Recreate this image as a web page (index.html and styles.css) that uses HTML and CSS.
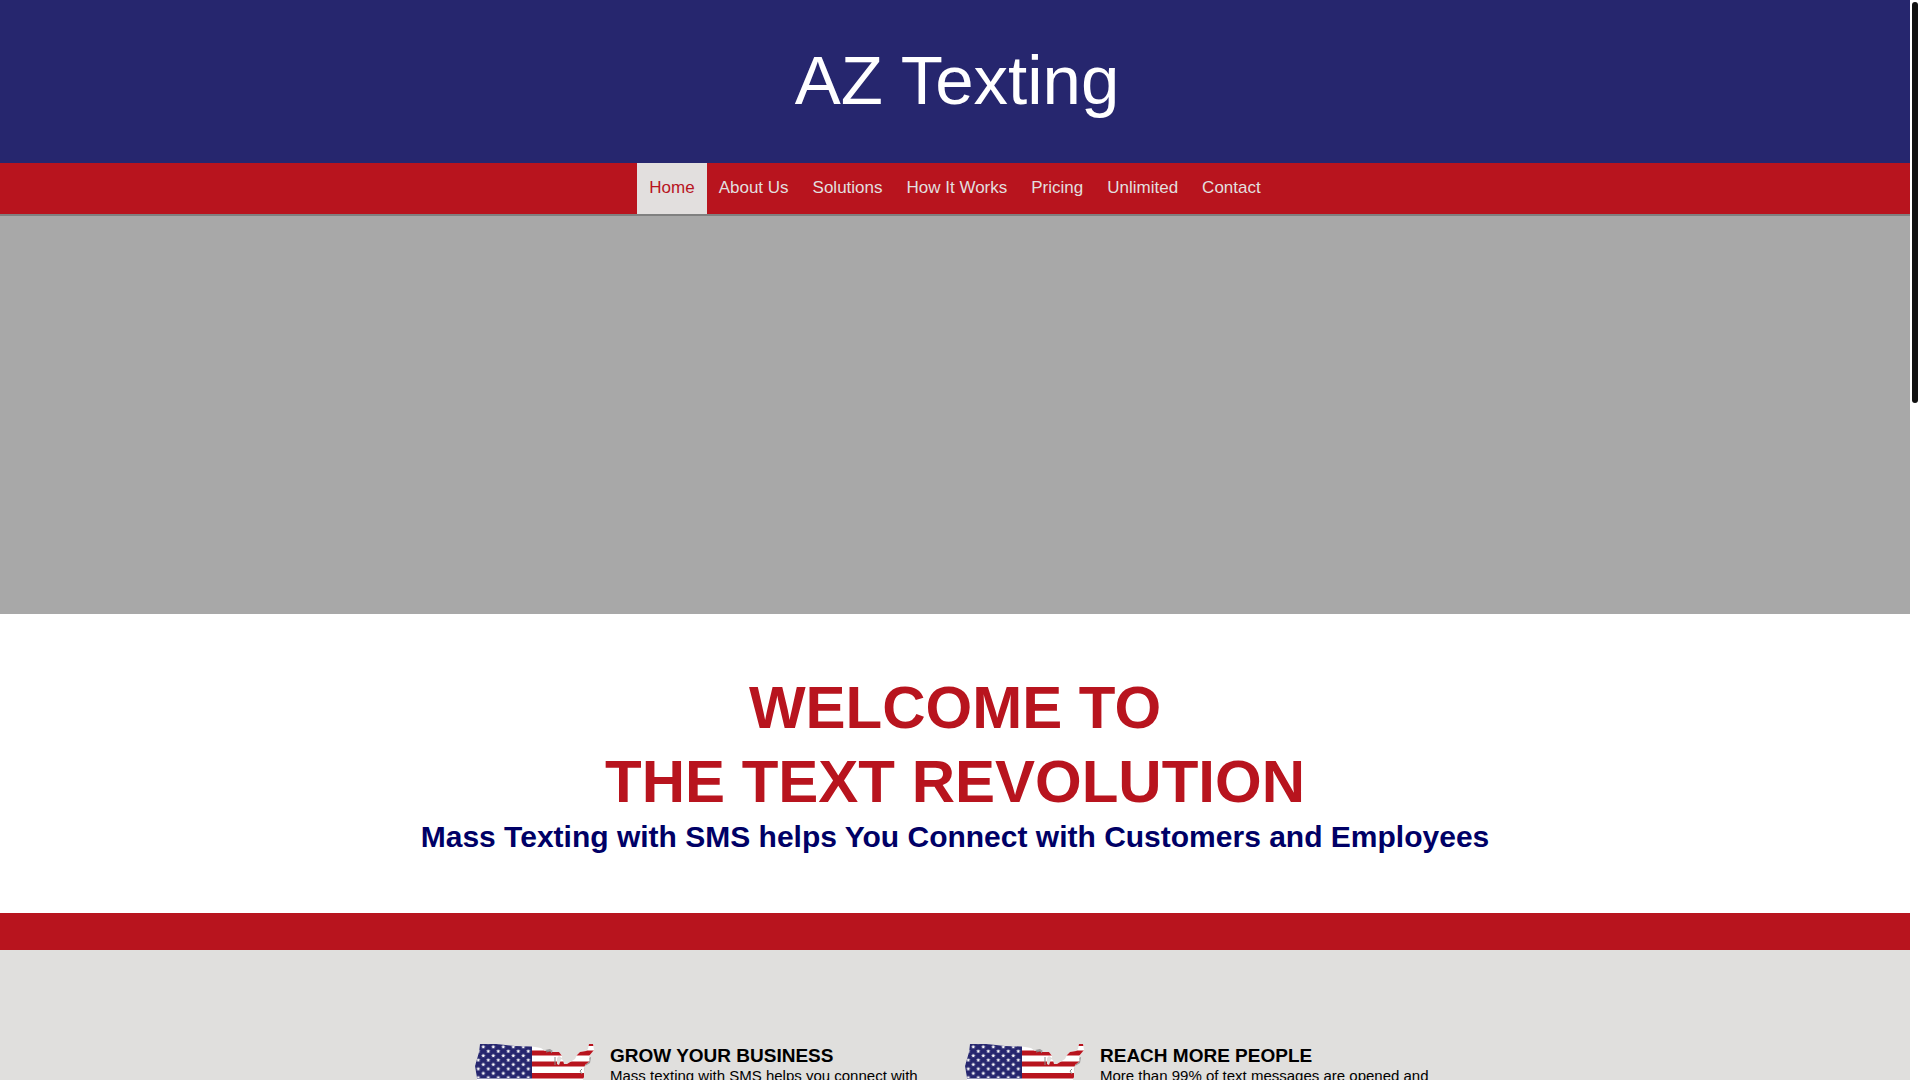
FILE: index.html
```html
<!DOCTYPE html>
<html lang="en">
<head>
    <meta charset="UTF-8">
    <meta name="viewport" content="width=device-width, initial-scale=1.0">
    <title>AZ Texting</title>
    <link rel="stylesheet" href="styles.css">
</head>
<body>
    <svg class="sprite" aria-hidden="true">
        <defs>
            <pattern id="stars" width="10" height="8.8" patternUnits="userSpaceOnUse" x="3.3" y="-1.7">
                <path id="star" fill="#fff" d="M5 2.400l.6 1.300 1.400.2-1 1 .3 1.400L5 5.600l-1.300.7.300-1.400-1-1 1.400-.2z"/>
                <use href="#star" x="-5" y="-4.4"/>
                <use href="#star" x="5" y="-4.4"/>
                <use href="#star" x="-5" y="4.4"/>
                <use href="#star" x="5" y="4.4"/>
            </pattern>
            <clipPath id="usa">
                <path d="M5 0H22L40 2 57 2.500 66 4 70 7 75 7 77 8 84 8 87 12 87 14 84 12 82 14 82 20 84 21 86 15 88 16 89 20 92 20 100 15 102 11 105 8 111 7 113 5 114 0H118L119 6 114 12 115 17 110 21 109 26 109 33 107 38V75H12L2 52V34L0 22 4 8z"/>
            </clipPath>
            <symbol id="flag" viewBox="0 0 120 75">
                <path fill="#999" d="M70 6l5-1 3 2-3 2zM79 13h3v8h-2zM114 14l2-1-1 6-5 3-1 5-2 1z"/>
                <g clip-path="url(#usa)">
                    <path fill="#fff" d="M0 0h120v75H0z"/>
                    <path fill="#b8141e" d="M57 6.500h63v5H57zM57 17.500h63v5H57zM57 29h63v5.500H57zM0 41h120v6H0zM0 53h120v6H0zM0 65h120v6H0zM113 0h7v2h-7z"/>
                    <path fill="#26266e" d="M0 0h57v34.500H0z"/>
                    <path fill="url(#stars)" d="M0 0h56v34H0z"/>
                    <path fill="none" stroke="#888" d="M71 8l4-1 2 2M80 13v8M115 14v4l-4 4-1 8M107 25l-2 2 2 3"/>
                </g>
            </symbol>
        </defs>
    </svg>

    <div class="page">
        <header class="header">
            <p class="logo">AZ Texting</p>
        </header>
        <nav class="nav">
            <a class="active" href="#">Home</a>
            <a href="#">About Us</a>
            <a href="#">Solutions</a>
            <a href="#">How It Works</a>
            <a href="#">Pricing</a>
            <a href="#">Unlimited</a>
            <a href="#">Contact</a>
        </nav>
        <div class="slider"></div>
        <section class="welcome">
            <h1>WELCOME TO<br>THE TEXT REVOLUTION</h1>
            <h2>Mass Texting with SMS helps You Connect with Customers and Employees</h2>
        </section>
        <div class="divider"></div>
        <section class="features">
            <div class="feature">
                <svg class="flag" role="img" aria-label="USA flag map"><use href="#flag"/></svg>
                <div>
                    <h3>GROW YOUR BUSINESS</h3>
                    <p>Mass texting with SMS helps you connect with</p>
                </div>
            </div>
            <div class="feature">
                <svg class="flag" role="img" aria-label="USA flag map"><use href="#flag"/></svg>
                <div>
                    <h3>REACH MORE PEOPLE</h3>
                    <p>More than 99% of text messages are opened and</p>
                </div>
            </div>
        </section>
    </div>
    <div class="scrollbar"><div class="thumb"></div></div>
</body>
</html>
```

FILE: styles.css
```css
* {
    box-sizing: border-box;
}

body {
    font-family: "Liberation Sans", Arial, sans-serif;
    margin: 0;
    height: 100vh;
    overflow: hidden;
    display: flex;
    background: #fff;
}

h1, h2, h3, p {
    margin: 0;
}

.sprite {
    position: absolute;
    width: 0;
    height: 0;
}

.page {
    flex: 1;
    height: 100vh;
    overflow: hidden;
}

.header {
    background: #26266e;
    color: #fff;
    padding: 39px 0 41px 4px;
    text-align: center;
}

.logo {
    font-size: 69px;
    line-height: 83px;
}

.nav {
    display: flex;
    justify-content: center;
    background: #b8141e;
    border-bottom: 2px solid #808080;
}

.nav a {
    color: #e2dfde;
    font-size: 17px;
    line-height: 19px;
    padding: 15px 12px 17px;
    text-decoration: none;
}

.nav a.active {
    background: #e2dfde;
    color: #b8141e;
}

.slider {
    height: 398px;
    background: #a8a8a8;
}

.welcome {
    background: #fff;
    padding: 57px 0 59px;
    text-align: center;
}

.welcome h1 {
    color: #b8141e;
    font-size: 60px;
    line-height: 74px;
}

.welcome h2 {
    color: #000066;
    font-size: 30px;
    line-height: 35px;
}

.divider {
    height: 37px;
    background: #b8141e;
}

.features {
    background: #e0dfdd;
    display: flex;
    justify-content: center;
    padding: 94px 0;
}

.feature {
    display: flex;
    gap: 15px;
    width: 490px;
    padding: 0 10px;
}

.feature .flag {
    width: 120px;
    height: 75px;
    flex: none;
}

.feature h3 {
    font-size: 19px;
    line-height: 24px;
}

.feature p {
    font-size: 15px;
    line-height: 15px;
}

.scrollbar {
    width: 10px;
    padding: 2px;
    background: #fff;
}

.thumb {
    width: 6px;
    height: 401px;
    border-radius: 3px;
    background: #111;
}
```
